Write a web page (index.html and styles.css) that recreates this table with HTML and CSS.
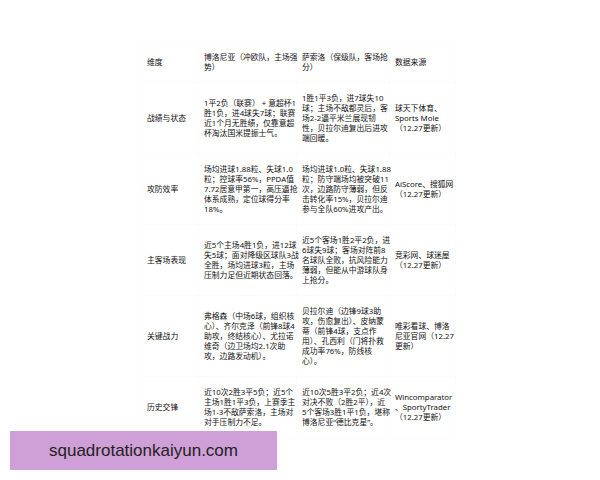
FILE: index.html
```html
<!DOCTYPE html>
<html lang="zh-CN">
<head>
<meta charset="utf-8">
<title>博洛尼亚 vs 萨索洛</title>
<link rel="stylesheet" href="styles.css">
</head>
<body>
<table class="cmp">
  <colgroup>
    <col class="c-dim">
    <col class="c-home">
    <col class="c-away">
    <col class="c-src">
  </colgroup>
  <tr>
    <td>维度</td>
    <td>博洛尼亚（冲欧队，主场强<br>势）</td>
    <td>萨索洛（保级队，客场抢<br>分）</td>
    <td>数据来源</td>
  </tr>
  <tr>
    <td>战绩与状态</td>
    <td>1平2负（联赛） + 意超杯1<br>胜1负，进4球失7球；联赛<br>近1个月无胜绩，仅靠意超<br>杯淘汰国米提振士气。</td>
    <td>1胜1平3负，进7球失10<br>球；主场不敌都灵后，客<br>场2-2逼平米兰展现韧<br>性，贝拉尔迪复出后进攻<br>端回暖。</td>
    <td>球天下体育、<br>Sports Mole<br>（12.27更新）</td>
  </tr>
  <tr>
    <td>攻防效率</td>
    <td>场均进球1.88粒、失球1.0<br>粒；控球率56%，PPDA值<br>7.72居意甲第一，高压逼抢<br>体系成熟，定位球得分率<br>18%。</td>
    <td>场均进球1.0粒、失球1.88<br>粒；防守端场均被突破11<br>次，边路防守薄弱，但反<br>击转化率15%，贝拉尔迪<br>参与全队60%进攻产出。</td>
    <td>AiScore、搜狐网<br>（12.27更新）</td>
  </tr>
  <tr>
    <td>主客场表现</td>
    <td>近5个主场4胜1负，进12球<br>失5球；面对降级区球队3战<br>全胜，场均进球3粒，主场<br>压制力足但近期状态回落。</td>
    <td>近5个客场1胜2平2负，进<br>6球失9球；客场对阵前8<br>名球队全败，抗风险能力<br>薄弱，但能从中游球队身<br>上抢分。</td>
    <td>竞彩网、球迷屋<br>（12.27更新）</td>
  </tr>
  <tr>
    <td>关键战力</td>
    <td>弗格森（中场6球，组织核<br>心）、齐尔克泽（前锋8球4<br>助攻，终结核心）、尤拉诺<br>维奇（边卫场均2.1次助<br>攻，边路发动机）。</td>
    <td>贝拉尔迪（边锋9球3助<br>攻，伤愈复出）、皮纳蒙<br>蒂（前锋4球，支点作<br>用）、孔西利（门将扑救<br>成功率76%，防线核<br>心）。</td>
    <td>唯彩看球、博洛<br>尼亚官网（12.27<br>更新）</td>
  </tr>
  <tr>
    <td>历史交锋</td>
    <td>近10次2胜3平5负；近5个<br>主场1胜1平3负，上赛季主<br>场1-3不敌萨索洛，主场对<br>对手压制力不足。</td>
    <td>近10次5胜3平2负；近4次<br>对决不败（2胜2平），近<br>5个客场3胜1平1负，堪称<br>博洛尼亚“德比克星”。</td>
    <td>Wincomparator<br>、SportyTrader<br>（12.27更新）</td>
  </tr>
</table>
<div class="watermark">squadrotationkaiyun.com</div>
</body>
</html>
```
FILE: styles.css
```css
html, body {
  margin: 0;
  padding: 0;
  background: #ffffff;
}

body {
  width: 600px;
  height: 480px;
  position: relative;
  overflow: hidden;
}

.cmp {
  margin: 41px 0 0 141px;
  border-collapse: collapse;
  table-layout: fixed;
  width: 314px;
  font-family: "Noto Sans", "Noto Sans CJK SC", sans-serif;
  font-size: 7.8px;
  line-height: 10px;
  color: #111111;
}

.c-dim { width: 57px; }
.c-home { width: 98px; }
.c-away { width: 93px; }
.c-src { width: 66px; }

.cmp td {
  padding: 10px 3px 10px 5px;
  vertical-align: middle;
  white-space: nowrap;
  border: 1px solid #fcfcfc;
}

.watermark {
  position: absolute;
  left: 10px;
  top: 431px;
  width: 267px;
  height: 39px;
  background: #cf9fd7;
  color: #222222;
  font-family: "Liberation Sans", Arial, sans-serif;
  font-size: 17px;
  display: flex;
  align-items: center;
  justify-content: center;
}
```
